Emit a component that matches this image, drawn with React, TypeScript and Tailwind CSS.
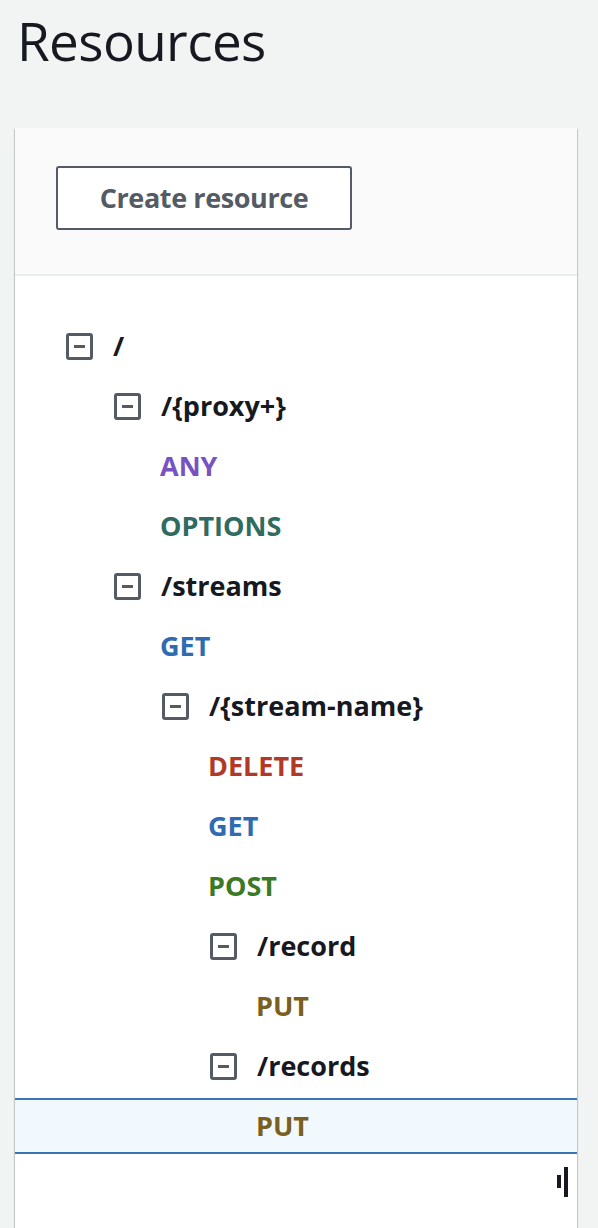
import React from 'react';

type Node =
  | { kind: 'resource'; path: string; depth: number }
  | { kind: 'method'; method: string; depth: number; selected?: boolean };

const methodColor: Record<string, string> = {
  ANY: 'text-[#7952c2]',
  OPTIONS: 'text-[#2f6b60]',
  GET: 'text-[#2e6bb0]',
  DELETE: 'text-[#b03a28]',
  POST: 'text-[#3b7a24]',
  PUT: 'text-[#7a5f20]',
};

const tree: Node[] = [
  { kind: 'resource', path: '/', depth: 0 },
  { kind: 'resource', path: '/{proxy+}', depth: 1 },
  { kind: 'method', method: 'ANY', depth: 1 },
  { kind: 'method', method: 'OPTIONS', depth: 1 },
  { kind: 'resource', path: '/streams', depth: 1 },
  { kind: 'method', method: 'GET', depth: 1 },
  { kind: 'resource', path: '/{stream-name}', depth: 2 },
  { kind: 'method', method: 'DELETE', depth: 2 },
  { kind: 'method', method: 'GET', depth: 2 },
  { kind: 'method', method: 'POST', depth: 2 },
  { kind: 'resource', path: '/record', depth: 3 },
  { kind: 'method', method: 'PUT', depth: 3 },
  { kind: 'resource', path: '/records', depth: 3 },
  { kind: 'method', method: 'PUT', depth: 3, selected: true },
];

const indent = ['pl-[51px]', 'pl-[99px]', 'pl-[147px]', 'pl-[195px]'];
const methodIndent = ['pl-[97px]', 'pl-[145px]', 'pl-[193px]', 'pl-[241px]'];

function CollapseIcon() {
  return (
    <span className="flex h-[27px] w-[27px] shrink-0 items-center justify-center rounded-[3px] border-[3px] border-[#545b64]">
      <span className="h-[3px] w-[11px] bg-[#545b64]" />
    </span>
  );
}

export default function App() {
  return (
    <div
      className="min-h-[1228px] bg-[#f2f3f3] text-[#16191f]"
      style={{ fontFamily: '"Open Sans", "Noto Sans", Arial, sans-serif' }}
    >
      <h1 className="pl-[17px] pt-[9px] text-[53px] leading-[64px] tracking-[-0.6px]">Resources</h1>

      <div className="ml-[15px] mt-[55px] w-[562px] bg-white shadow-[0_1px_1px_0_rgba(0,28,36,0.3),1px_1px_1px_0_rgba(0,28,36,0.15),-1px_1px_1px_0_rgba(0,28,36,0.15)]">
        <div className="border-b-2 border-[#eaeded] bg-[#fafafa] pb-[44px] pl-[41px] pt-[38px]">
          <button className="h-[64px] w-[296px] rounded-[3px] border-2 border-[#545b64] bg-white text-[27px] font-bold tracking-[-0.4px] text-[#545b64]">
            Create resource
          </button>
        </div>

        <ul className="pt-[40px]">
          {tree.map((n, i) => (
            <li key={i} className="py-[2px]">
              {n.kind === 'resource' ? (
                <div className={`flex h-[56px] items-center gap-[20px] ${indent[n.depth]}`}>
                  <CollapseIcon />
                  <span className="text-[27px] font-bold">{n.path}</span>
                </div>
              ) : (
                <div
                  className={`flex h-[56px] items-center ${methodIndent[n.depth]} ${
                    n.selected ? 'border-y-2 border-[#3a73b6] bg-[#f1f8fe]' : ''
                  }`}
                >
                  <span className={`text-[27px] font-bold ${methodColor[n.method]}`}>{n.method}</span>
                </div>
              )}
            </li>
          ))}
        </ul>

        <div className="flex h-[80px] items-start justify-end gap-[3px] pr-[9px] pt-[11px]">
          <span className="mt-[8px] h-[13px] w-[4px] bg-[#16191f]" />
          <span className="h-[30px] w-[4px] bg-[#16191f]" />
        </div>
      </div>
    </div>
  );
}
